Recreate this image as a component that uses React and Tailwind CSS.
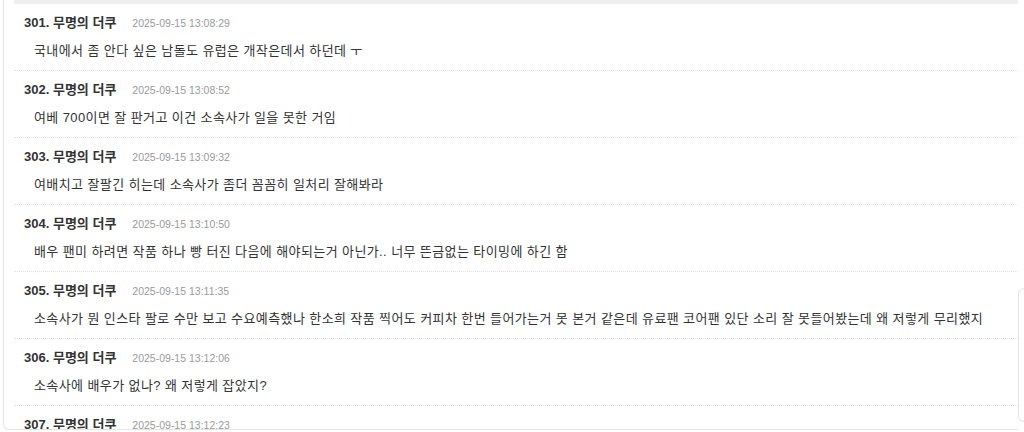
import React from "react";

const comments = [
  { no: 301, time: "2025-09-15 13:08:29", text: "국내에서 좀 안다 싶은 남돌도 유럽은 개작은데서 하던데 ㅜ" },
  { no: 302, time: "2025-09-15 13:08:52", text: "여베 700이면 잘 판거고 이건 소속사가 일을 못한 거임" },
  { no: 303, time: "2025-09-15 13:09:32", text: "여배치고 잘팔긴 히는데 소속사가 좀더 꼼꼼히 일처리 잘해봐라" },
  { no: 304, time: "2025-09-15 13:10:50", text: "배우 팬미 하려면 작품 하나 빵 터진 다음에 해야되는거 아닌가.. 너무 뜬금없는 타이밍에 하긴 함" },
  {
    no: 305,
    time: "2025-09-15 13:11:35",
    text: "소속사가 뭔 인스타 팔로 수만 보고 수요예측했나 한소희 작품 찍어도 커피차 한번 들어가는거 못 본거 같은데 유료팬 코어팬 있단 소리 잘 못들어봤는데 왜 저렇게 무리했지",
  },
  { no: 306, time: "2025-09-15 13:12:06", text: "소속사에 배우가 없나? 왜 저렇게 잡았지?" },
  { no: 307, time: "2025-09-15 13:12:23", text: "" },
];

const font = { fontFamily: '"Liberation Sans", "Noto Sans CJK KR", sans-serif' };

const Comment = ({ item }) => {
  return (
    <div className="border-b border-dotted border-[#e2e2e2] pl-[10px] pt-[11px] pb-[9px]">
      <div className="flex items-center h-[16px]">
        <span className="text-[13px] font-bold text-[#333] leading-[16px]">
          {item.no}. 무명의 더쿠
        </span>
        <span className="ml-[16px] text-[10.5px] text-[#9a9a9a] leading-[16px]">{item.time}</span>
      </div>
      <p className="mt-[9px] pl-[10px] text-[13px] tracking-[0.4px] text-[#333] leading-[21px] whitespace-nowrap">
        {item.text}
      </p>
    </div>
  );
};

export default function App() {
  return (
    <div className="flex h-[432px] overflow-hidden bg-white" style={font}>
      {/* main comment list */}
      <div className="ml-[3px] w-[1015px] h-[430px] border-l border-b border-[#e4e4e4] rounded-bl-[6px] pl-[10px] overflow-hidden">
        <div className="h-[4px] bg-[#eeeeee]" />
        {comments.map((c) => (
          <Comment key={c.no} item={c} />
        ))}
      </div>

      {/* side box peeking from the right */}
      <div className="mt-[288px] h-[134px] flex-1 border-l border-t border-b border-[#e4e4e4] rounded-l-[6px] bg-white" />
    </div>
  );
}
